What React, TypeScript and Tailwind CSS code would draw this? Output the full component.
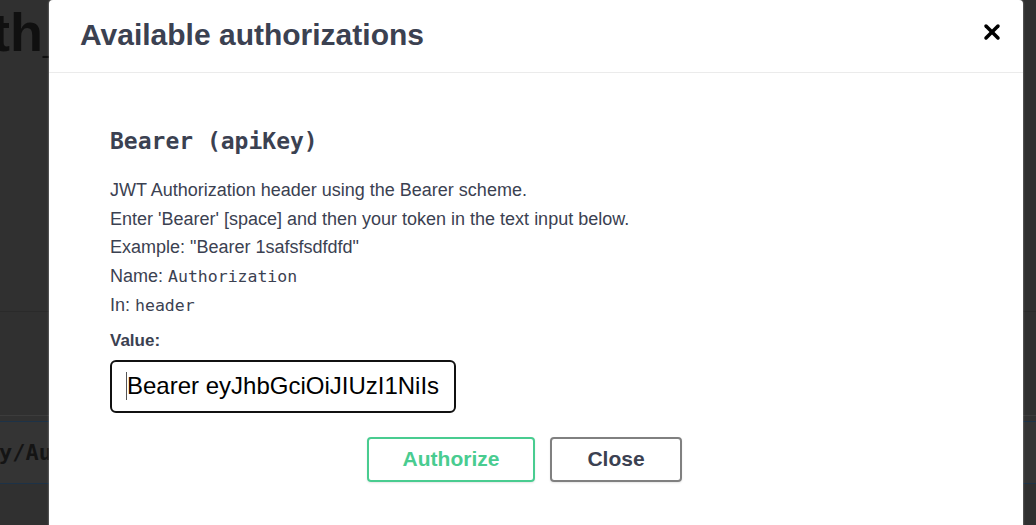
import { X } from 'lucide-react';

const sans = "font-['Liberation_Sans',Arial,sans-serif]";
const mono = "font-['DejaVu_Sans_Mono','Liberation_Mono',monospace]";

function Backdrop() {
  return (
    <div className="flex h-full w-full flex-col bg-[#303030]">
      <div className={`h-[311px] whitespace-nowrap pt-[2px] ${sans}`}>
        <h1 className="-ml-[80px] text-[54px] font-bold leading-[60px] text-[#101010]">Auth_login</h1>
      </div>
      <div className="h-[104px] border-t border-[#2a2a2a] bg-[#303030]" />
      <div className="h-[6px] border-t border-[#3c3c3c] bg-[#313131]" />
      <div className={`flex h-[63px] items-center whitespace-nowrap border-y border-[#1d3247] bg-[#343434] ${mono}`}>
        <span className="-ml-[160px] text-[22px] font-bold text-[#141414]">/api/Identity/Auth</span>
      </div>
      <div className="flex-1 bg-[#303030]" />
    </div>
  );
}

function Line({ children }: { children: React.ReactNode }) {
  return <p className="text-[18px] leading-[28.5px] text-[#3b4151]">{children}</p>;
}

export default function App() {
  return (
    <div className={`relative h-[525px] w-[1036px] overflow-hidden ${sans}`}>
      <Backdrop />

      <div className="absolute left-[49px] top-0 h-[540px] w-[974px] rounded-t-[4px] bg-white shadow-[0_0_2px_rgba(255,255,255,0.6)]">
        <div className="flex h-[73px] items-start justify-between border-b border-[#ebebeb] pl-[31px] pr-[19px]">
          <h3 className="pt-[15px] text-[30px] font-bold leading-[40px] text-[#3b4151]">Available authorizations</h3>
          <button className="mt-[20px] flex h-[24px] w-[24px] items-center justify-center text-black">
            <X className="h-[24px] w-[24px]" strokeWidth={3.5} />
          </button>
        </div>

        <div className="px-[61px] pt-[51px]">
          <h4 className={`text-[23px] font-bold leading-[34px] text-[#3b4151] ${mono}`}>Bearer (apiKey)</h4>

          <div className="mt-[18px]">
            <Line>JWT Authorization header using the Bearer scheme.</Line>
            <Line>Enter 'Bearer' [space] and then your token in the text input below.</Line>
            <Line>Example: "Bearer 1safsfsdfdfd"</Line>
            <Line>
              Name: <code className={`text-[16.5px] ${mono}`}>Authorization</code>
            </Line>
            <Line>
              In: <code className={`text-[16.5px] ${mono}`}>header</code>
            </Line>
          </div>

          <label className="mt-[8px] block text-[17px] font-bold leading-[24px] text-[#3b4151]">Value:</label>
          <div className="mt-[7px] flex h-[53px] w-[346px] items-center rounded-[6px] border-2 border-[#111] pl-[14px]">
            <span className="h-[28px] w-px bg-[#555]" />
            <span className="text-[24px] text-black">Bearer eyJhbGciOiJIUzI1NiIs</span>
          </div>

          <div className="mt-[24px] flex gap-[15px] pl-[257px]">
            <button className="h-[45px] w-[168px] rounded-[4px] border-2 border-[#49cc90] text-[21px] font-bold text-[#49cc90] shadow-[0_1px_2px_rgba(0,0,0,0.1)]">
              Authorize
            </button>
            <button className="h-[45px] w-[132px] rounded-[4px] border-2 border-[#808080] text-[21px] font-bold text-[#3b4151] shadow-[0_1px_2px_rgba(0,0,0,0.1)]">
              Close
            </button>
          </div>
        </div>
      </div>
    </div>
  );
}
